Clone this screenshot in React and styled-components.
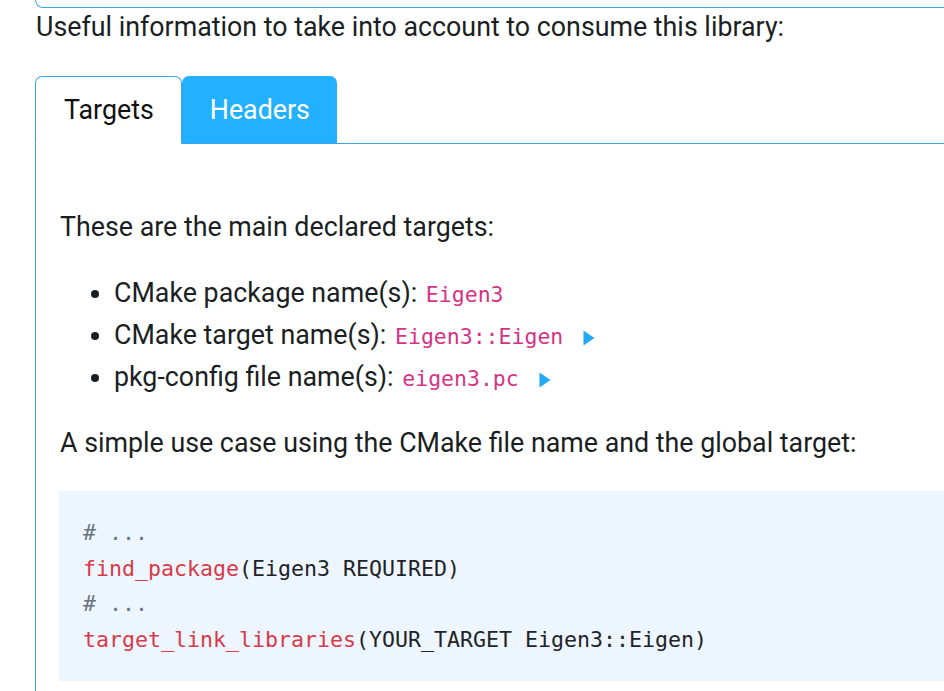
import React from "react";
import styled, { createGlobalStyle } from "styled-components";

const Global = createGlobalStyle`
  html, body { margin: 0; padding: 0; background: #fff; overflow: hidden; }
  body { font-family: Roboto, "Liberation Sans", sans-serif; color: #1b1f23; }
`;

const Page = styled.div`
  width: 1100px;
  height: 691px;
  overflow: hidden;
  padding-left: 35px;
`;

const TopBox = styled.div`
  height: 7px;
  border: 1px solid #3aa3e8;
  border-top: none;
  border-radius: 0 0 0 8px;
`;

const Intro = styled.p`
  margin: 1px 0 0 1px;
  font-size: 26.8px;
  line-height: 36px;
`;

const TabBar = styled.div`
  display: flex;
  margin-top: 31px;
  border-bottom: 1px solid #3aa3e8;
`;

const Tab = styled.div`
  padding: 0 27px 0 28px;
  display: flex;
  align-items: center;
  font-size: 26.8px;
  border-radius: 7px 7px 0 0;
  margin-bottom: -1px;
  box-sizing: border-box;
  ${(p) =>
    p.$active
      ? `background:#fff;color:#111;border:1px solid #3aa3e8;border-bottom:1px solid #fff;height:68px;`
      : `background:#22b0ff;color:#fff;height:67px;`}
`;

const Panel = styled.div`
  border-left: 1px solid #3aa3e8;
  padding: 65px 0 0 24px;
  height: 600px;
`;

const Para = styled.p`
  margin: 0;
  font-size: 26.8px;
  line-height: 36px;
`;

const List = styled.ul`
  margin: 28px 0 26px;
  padding-left: 54px;
  font-size: 26.8px;
  line-height: 41px;
`;

const Item = styled.li``;

const Code = styled.code`
  font-family: "DejaVu Sans Mono", "Liberation Mono", monospace;
  font-size: 21.5px;
  color: #d63384;
  margin-left: 2px;
`;

const Marker = styled.svg`
  margin-left: 20px;
  vertical-align: -2px;
`;

const Pre = styled.pre`
  margin: 30px 0 0 -1px;
  background: #edf6fe;
  padding: 24px 24px;
  font-family: "DejaVu Sans Mono", "Liberation Mono", monospace;
  font-size: 21.6px;
  line-height: 35.5px;
  color: #1f2328;
`;

const Comment = styled.span`
  color: #6a737d;
`;

const Fn = styled.span`
  color: #d73a49;
`;

const Tri = () => (
  <Marker width="12" height="16" viewBox="0 0 12 16">
    <path d="M0.5 0.5 L11.5 8 L0.5 15.5 Z" fill="#22aaf5" />
  </Marker>
);

export default function App() {
  return (
    <>
      <Global />
      <Page>
        <TopBox />
        <Intro>Useful information to take into account to consume this library:</Intro>
        <TabBar>
          <Tab $active>Targets</Tab>
          <Tab>Headers</Tab>
        </TabBar>
        <Panel>
          <Para>These are the main declared targets:</Para>
          <List>
            <Item>
              CMake package name(s): <Code>Eigen3</Code>
            </Item>
            <Item>
              CMake target name(s): <Code>Eigen3::Eigen</Code>
              <Tri />
            </Item>
            <Item>
              pkg-config file name(s): <Code>eigen3.pc</Code>
              <Tri />
            </Item>
          </List>
          <Para>A simple use case using the CMake file name and the global target:</Para>
          <Pre>
            <Comment># ...</Comment>
            {"\n"}
            <Fn>find_package</Fn>(Eigen3 REQUIRED)
            {"\n"}
            <Comment># ...</Comment>
            {"\n"}
            <Fn>target_link_libraries</Fn>(YOUR_TARGET Eigen3::Eigen)
          </Pre>
        </Panel>
      </Page>
    </>
  );
}
